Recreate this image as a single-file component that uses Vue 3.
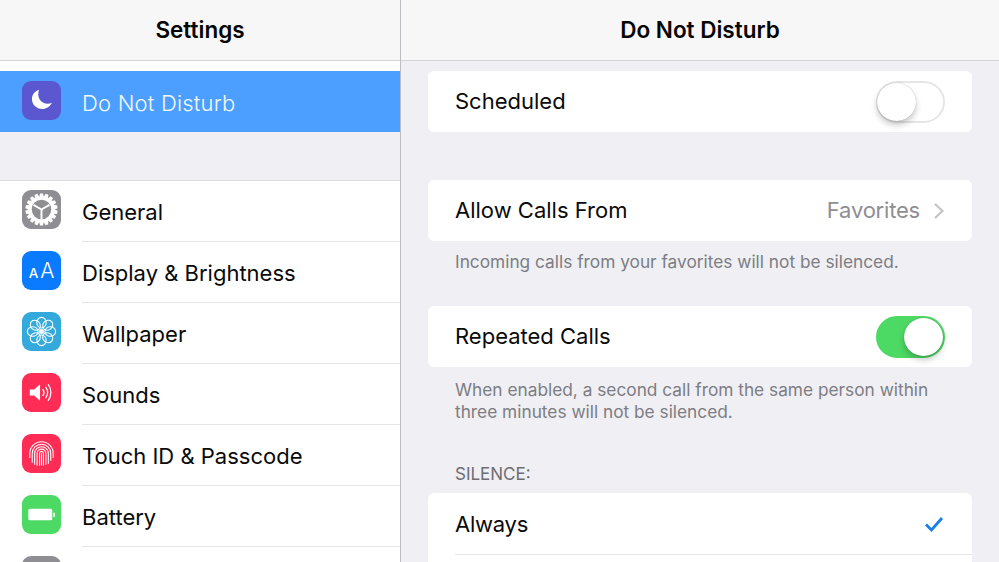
<template>
  <div class="app">
    <aside class="sidebar">
      <header class="nav">Settings</header>
      <div class="top-gap"></div>
      <div class="row selected">
        <span class="icon purple">
          <svg viewBox="0 0 40 40"><path d="M17.400 9C13 10.500 10.200 14.100 10.200 18.400c0 5.800 4.700 10.200 10.500 10.200 4.300 0 8.100-2.500 10.100-6.400-1.400.8-2.900 1.100-4.500 1.100-5.500 0-9.600-4.300-9.600-9.700 0-2 .4-3.800 1-5.400z" fill="#fff"/></svg>
        </span>
        <span class="label">Do Not Disturb</span>
      </div>
      <div class="mid-gap"></div>
      <div class="group">
        <div v-for="item in items" :key="item.id" class="row">
          <span class="icon" :class="item.color">
            <svg v-if="item.id === 'general'" viewBox="0 0 40 40">
              <path :d="gearPath" fill="#fff" fill-rule="evenodd"/>
              <path d="M20 20L11.800 15.200M20 20l8.200-4.800M20 20v10" stroke="#fff" stroke-width="2" fill="none"/>
            </svg>
            <span v-else-if="item.id === 'display'" class="aa"><small>A</small>A</span>
            <svg v-else-if="item.id === 'wallpaper'" viewBox="0 0 40 40">
              <ellipse v-for="a in petals" :key="a" cx="20" cy="11" rx="4.800" ry="5.500" fill="none" stroke="#fff" stroke-width="1.100" :transform="`rotate(${a} 20 20)`"/>
              <circle cx="20" cy="20" r="2.600" fill="#fff"/>
            </svg>
            <svg v-else-if="item.id === 'sounds'" viewBox="0 0 40 40">
              <path d="M8 16.800h4.500l6-5.300v17l-6-5.300H8z" fill="#fff"/>
              <path d="M21.500 17c1.300 1.800 1.300 4.200 0 6M24.300 14.500c2.500 3.300 2.500 7.700 0 11M27 12c3.500 4.800 3.500 11.200 0 16" fill="none" stroke="#fff" stroke-width="1.300" stroke-linecap="round"/>
            </svg>
            <svg v-else-if="item.id === 'touch'" viewBox="0 0 40 40">
              <g fill="none" stroke="#fff" stroke-width="1.100" stroke-linecap="round">
                <path d="M8 24v-4a12 12 0 0 1 24 0v4"/>
                <path d="M10.500 29v-9a9.500 9.500 0 0 1 19 0v7"/>
                <path d="M13 31v-11a7 7 0 0 1 14 0v10"/>
                <path d="M15.500 32v-12a4.500 4.500 0 0 1 9 0v11"/>
                <path d="M18 32v-12a2 2 0 0 1 4 0v12"/>
                <path d="M20 20v12"/>
              </g>
            </svg>
            <svg v-else-if="item.id === 'battery'" viewBox="0 0 40 40">
              <rect x="6.500" y="14" width="24.500" height="12" rx="1.500" fill="#fff"/>
              <rect x="32" y="18" width="1.800" height="4.500" rx=".8" fill="#fff"/>
            </svg>
          </span>
          <span class="label">{{ item.name }}</span>
        </div>
      </div>
    </aside>

    <main class="detail">
      <header class="nav">Do Not Disturb</header>
      <div class="content">
        <section class="card first">
          <div class="cell">
            <span class="text">Scheduled</span>
            <span class="toggle"><i class="knob"></i></span>
          </div>
        </section>

        <section class="card">
          <div class="cell">
            <span class="text">Allow Calls From</span>
            <span class="value">
              <span class="text muted">Favorites</span>
              <svg class="chevron" width="12" height="18" viewBox="0 0 12 18"><path d="M2 2l7.500 7L2 16" fill="none" stroke="#c4c4c8" stroke-width="2.200"/></svg>
            </span>
          </div>
        </section>
        <p class="note">Incoming calls from your favorites will not be silenced.</p>

        <section class="card near">
          <div class="cell">
            <span class="text">Repeated Calls</span>
            <span class="toggle on"><i class="knob"></i></span>
          </div>
        </section>
        <p class="note two">When enabled, a second call from the same person within<br>three minutes will not be silenced.</p>

        <h3 class="section-title">SILENCE:</h3>
        <section class="card last">
          <div class="cell lined">
            <span class="always">Always</span>
            <svg class="check" width="20" height="16" viewBox="0 0 20 16"><path d="M2 8.500l5.500 5.500L18 2" fill="none" stroke="#1a7fe8" stroke-width="2.800"/></svg>
          </div>
        </section>
      </div>
    </main>
  </div>
</template>

<script setup>
const items = [
  { id: 'general', name: 'General', color: 'grey' },
  { id: 'display', name: 'Display & Brightness', color: 'blue' },
  { id: 'wallpaper', name: 'Wallpaper', color: 'teal' },
  { id: 'sounds', name: 'Sounds', color: 'red' },
  { id: 'touch', name: 'Touch ID & Passcode', color: 'red' },
  { id: 'battery', name: 'Battery', color: 'green' },
  // only the top of this icon is in frame, its label is below the fold
  { id: 'next', name: '', color: 'grey' }
]

const petals = [0, 45, 90, 135, 180, 225, 270, 315]

// ring with 18 square teeth round the outside, hollow inside
const buildGear = () => {
  const teeth = 18
  const pts = []
  for (let i = 0; i < teeth; i++) {
    const step = (Math.PI * 2) / teeth
    const a = i * step
    const corners = [[13.4, -0.5], [16.6, -0.26], [16.6, 0.26], [13.4, 0.5]]
    for (const [r, f] of corners) {
      const t = a + f * step
      pts.push(`${(20 + r * Math.sin(t)).toFixed(2)} ${(20 - r * Math.cos(t)).toFixed(2)}`)
    }
  }
  const inner = 'M20 10a10 10 0 1 0 0 20a10 10 0 1 0 0-20z'
  return `M${pts.join('L')}z${inner}`
}
const gearPath = buildGear()
</script>

<style>
html, body {
  margin: 0;
  height: 100%;
  overflow: hidden;
}
</style>

<style scoped>
.app {
  display: flex;
  width: 999px;
  height: 562px;
  overflow: hidden;
  background: #efeff4;
  color: #0a0a0a;
  font-family: Inter, "Liberation Sans", sans-serif;
  font-size: 22px;
}
.sidebar {
  flex: none;
  width: 400px;
  border-right: 1px solid #bdbdc1;
  background: #efeff4;
}
.detail {
  flex: 1;
  min-width: 0;
}
.nav {
  box-sizing: border-box;
  height: 61px;
  padding-bottom: 1px;
  display: flex;
  align-items: center;
  justify-content: center;
  background: #f7f7f8;
  border-bottom: 1px solid #d4d4d8;
  font-size: 22.500px;
  font-weight: 600;
  color: #050505;
}
.top-gap {
  height: 10px;
  background: #fff;
}
.mid-gap {
  height: 48px;
}
.group {
  background: #fff;
  box-shadow: inset 0 1px #dcdce0;
}
.row {
  box-sizing: border-box;
  height: 61px;
  padding-left: 22px;
  display: flex;
  align-items: center;
  gap: 21px;
}
.row.selected {
  background: #4c9fff;
  color: #f2f8ff;
}
.row .label {
  flex: 1;
  align-self: flex-start;
  box-sizing: border-box;
  height: 62px;
  padding-top: 4px;
  line-height: 56px;
  border-bottom: 1px solid #e6e6e9;
}
.row.selected .label {
  border-bottom: none;
  font-weight: 300;
  letter-spacing: 0.2px;
}
.icon {
  flex: none;
  width: 39px;
  height: 39px;
  margin-bottom: 3px;
  border-radius: 9px;
  display: flex;
  align-items: center;
  justify-content: center;
}
.selected .icon {
  margin-bottom: 2px;
}
.icon svg {
  width: 39px;
  height: 39px;
}
.purple { background: #5b57d1; }
.grey { background: #8e8e93; }
.blue { background: #0a7aff; }
.teal { background: #34aadc; }
.red { background: #ff2d55; }
.green { background: #4cd964; }
.aa {
  color: #fff;
  font-size: 21px;
  font-weight: 300;
  line-height: 1;
  display: flex;
  align-items: baseline;
  gap: 2px;
}
.aa small {
  font-size: 13.500px;
  font-weight: 500;
}
.content {
  padding: 0 27px;
}
.card {
  margin-top: 48px;
  background: #fff;
  border-radius: 6px;
}
.card.first {
  margin-top: 10px;
}
.card.near {
  margin-top: 33px;
}
.cell {
  box-sizing: border-box;
  height: 61px;
  padding: 0 27px;
  display: flex;
  align-items: center;
  justify-content: space-between;
}
.text {
  margin-bottom: 2px;
}
.always {
  letter-spacing: -0.25px;
}
.cell.lined {
  position: relative;
  height: 62px;
}
.cell.lined::after {
  content: "";
  position: absolute;
  left: 27px;
  right: 0;
  bottom: 0;
  height: 1px;
  background: #e6e6e9;
}
.value {
  display: flex;
  align-items: center;
  gap: 13px;
}
.muted {
  color: #8e8e93;
  letter-spacing: -0.2px;
}
.chevron {
  flex: none;
}
.check {
  flex: none;
  margin-right: 1px;
}
.toggle {
  position: relative;
  flex: none;
  box-sizing: border-box;
  width: 69px;
  height: 42px;
  border-radius: 21px;
  border: 2px solid #e6e6e9;
  background: #fff;
}
.knob {
  position: absolute;
  top: 0;
  left: -1px;
  width: 39px;
  height: 38px;
  border-radius: 50%;
  background: #fff;
  box-shadow: 0 4px 6px rgba(0, 0, 0, 0.22), 0 0 1px rgba(0, 0, 0, 0.3);
}
.toggle.on {
  background: #4cd964;
  border-color: #4cd964;
}
.toggle.on .knob {
  left: 26px;
}
.note {
  margin: 10px 27px 0;
  font-size: 17.300px;
  line-height: 22px;
  color: #7d7d83;
}
.note.two {
  margin-top: 12px;
}
.section-title {
  margin: 40px 27px 0;
  font-size: 17px;
  line-height: 22px;
  font-weight: 400;
  color: #6d6d72;
}
.card.last {
  margin-top: 8px;
  height: 80px;
}
</style>
